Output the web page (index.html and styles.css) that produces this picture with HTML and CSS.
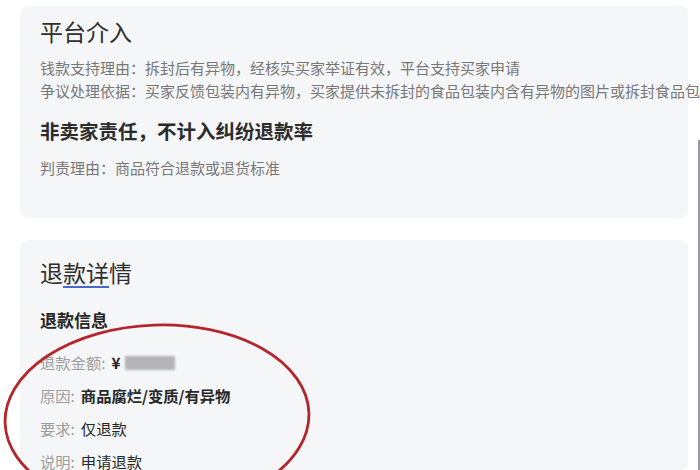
FILE: index.html
```html
<!DOCTYPE html>
<html lang="zh-CN">
<head>
<meta charset="utf-8">
<title>平台介入</title>
<link rel="stylesheet" href="styles.css">
</head>
<body>
<div class="page">
  <section class="card card-top">
    <h1 class="title">平台介入</h1>
    <p class="note first">钱款支持理由：拆封后有异物，经核实买家举证有效，平台支持买家申请</p>
    <p class="note">争议处理依据：买家反馈包装内有异物，买家提供未拆封的食品包装内含有异物的图片或拆封食品包</p>
    <p class="verdict">非卖家责任，不计入纠纷退款率</p>
    <p class="note reason">判责理由：商品符合退款或退货标准</p>
  </section>
  <section class="card card-bottom">
    <h1 class="title">退<span class="ul">款详</span>情</h1>
    <h2 class="subtitle">退款信息</h2>
    <div class="rows">
      <div class="row"><span class="label">退款金额:</span> <span class="val bold">¥</span><span class="blur"></span></div>
      <div class="row"><span class="label">原因:</span> <span class="val bold">商品腐烂/变质/有异物</span></div>
      <div class="row"><span class="label">要求:</span> <span class="val">仅退款</span></div>
      <div class="row"><span class="label">说明:</span> <span class="val">申请退款</span></div>
    </div>
  </section>
</div>
<svg class="circle" width="700" height="470" viewBox="0 0 700 470" aria-hidden="true">
  <ellipse cx="157" cy="418" rx="152" ry="93" transform="rotate(-2 157 418)" fill="none" stroke="#b3262c" stroke-width="2.8"/>
</svg>
<div class="edge"></div>
</body>
</html>
```
FILE: styles.css
```css
html, body {
  margin: 0;
  padding: 0;
  background: #ffffff;
  width: 700px;
  height: 470px;
  overflow: hidden;
  font-family: "Noto Sans CJK SC", "Noto Sans", sans-serif;
}
.page {
  padding: 6px 12px 0 20px;
  display: flex;
  flex-direction: column;
  gap: 22px;
}
.card {
  background: #f5f6f8;
  border-radius: 8px;
  padding-left: 20px;
}
.card-top {
  padding-top: 10px;
  padding-bottom: 39px;
}
.card-bottom {
  padding-top: 17px;
  height: 213px;
}
.title {
  margin: 0;
  font-size: 23px;
  line-height: 30px;
  font-weight: 400;
  color: #2e2e2e;
}
.ul {
  text-decoration: underline;
  text-decoration-color: #4a68c8;
  text-decoration-thickness: 2px;
  text-underline-offset: 4px;
}
.note {
  margin: 0;
  font-size: 15px;
  line-height: 23px;
  color: #777777;
  white-space: nowrap;
}
.note.first {
  margin-top: 10px;
}
.verdict {
  margin: 16px 0 0;
  font-size: 19.5px;
  line-height: 26px;
  font-weight: 700;
  color: #2b2b2b;
}
.note.reason {
  margin-top: 12px;
}
.subtitle {
  margin: 21px 0 0;
  font-size: 17px;
  line-height: 24px;
  font-weight: 700;
  color: #262626;
}
.rows {
  margin-top: 14px;
  display: flex;
  flex-direction: column;
}
.row {
  font-size: 15.3px;
  line-height: 33px;
  white-space: nowrap;
  display: flex;
  align-items: center;
}
.label {
  color: #9d9d9d;
  margin-right: 6px;
}
.val {
  color: #262626;
}
.val.bold {
  font-weight: 700;
}
.blur {
  display: inline-block;
  width: 50px;
  height: 14px;
  margin-left: 5px;
  background: #b3b3b8;
  filter: blur(1.2px);
}
.circle {
  position: absolute;
  left: 0;
  top: 0;
  pointer-events: none;
}
.edge {
  position: absolute;
  right: 0;
  top: 140px;
  width: 2px;
  height: 330px;
  background: #9a9aa0;
}
```
